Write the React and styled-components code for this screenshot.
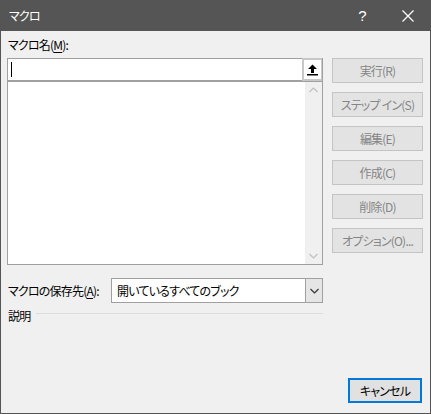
import React from "react";
import styled, { createGlobalStyle } from "styled-components";

const GlobalStyle = createGlobalStyle`
    html, body {
        margin: 0;
        padding: 0;
        background: #f0f0f0;
    }
    body {
        font-family: "Noto Sans CJK JP", "Liberation Sans", sans-serif;
        font-size: 12px;
        font-feature-settings: "palt";
        letter-spacing: -0.8px;
        color: #000;
    }
`;

const Window = styled.div`
    width: 431px;
    height: 414px;
    box-sizing: border-box;
    border: 1px solid #555555;
    border-top: none;
    background: #f0f0f0;
    display: flex;
    flex-direction: column;
`;

const TitleBar = styled.div`
    height: 31px;
    margin: 0 -1px;
    background: #555555;
    color: #ffffff;
    display: flex;
    align-items: center;
    padding-left: 9px;
`;

const Title = styled.div`
    flex: 1;
    font-size: 12px;
`;

const TitleButton = styled.div`
    width: ${(p) => p.w}px;
    height: 31px;
    display: flex;
    align-items: center;
    justify-content: center;
    font-size: 15px;
    font-family: "Liberation Sans", sans-serif;
`;

const Body = styled.div`
    flex: 1;
    display: flex;
    padding: 4px 0 0 6px;
    gap: 9px;
`;

const LeftCol = styled.div`
    width: 316px;
    display: flex;
    flex-direction: column;
`;

const Label = styled.div`
    line-height: 20px;
    height: 20px;
    margin-left: 1px;
    margin-bottom: 3px;
    white-space: nowrap;
`;

const U = styled.span`
    text-decoration: underline;
    text-underline-offset: 2px;
`;

const NameInput = styled.div`
    height: 23px;
    box-sizing: border-box;
    border: 1px solid #a0a0a0;
    background: #fff;
    display: flex;
    align-items: stretch;
`;

const Caret = styled.div`
    width: 1px;
    height: 15px;
    background: #000;
    margin: 3px 0 0 3px;
`;

const UpButton = styled.div`
    margin-left: auto;
    width: 20px;
    box-sizing: border-box;
    border: 2px solid #c8c8c8;
    border-right-width: 1px;
    background: #fff;
    display: flex;
    align-items: center;
    justify-content: center;
    margin-top: -1px;
    margin-bottom: -1px;
`;

const ListBox = styled.div`
    height: 184px;
    box-sizing: border-box;
    border: 1px solid #a0a0a0;
    background: #fff;
    display: flex;
`;

const ScrollBar = styled.div`
    margin-left: auto;
    width: 17px;
    background: #f0f0f0;
    display: flex;
    flex-direction: column;
    justify-content: space-between;
    align-items: center;
    padding: 5px 0;
`;

const StoreRow = styled.div`
    margin-top: 13px;
    display: flex;
    align-items: center;
    height: 25px;
`;

const StoreLabel = styled.div`
    width: 103px;
    padding-left: 1px;
    white-space: nowrap;
`;

const Combo = styled.div`
    flex: 1;
    height: 25px;
    box-sizing: border-box;
    border: 1px solid #a0a0a0;
    background: #fff;
    display: flex;
    align-items: center;
    padding-left: 5px;
`;

const ComboArrow = styled.div`
    margin-left: auto;
    width: 17px;
    height: 23px;
    box-sizing: border-box;
    background: #e5e5e5;
    border-left: 1px solid #a0a0a0;
    display: flex;
    align-items: center;
    justify-content: center;
`;

const DescRow = styled.div`
    margin-top: 1px;
    display: flex;
    align-items: center;
    height: 22px;
`;

const DescLabel = styled.div`
    padding-left: 1px;
    margin-right: 6px;
`;

const Rule = styled.div`
    flex: 1;
    height: 1px;
    background: #dcdcdc;
    margin-top: -4px;
`;

const RightCol = styled.div`
    width: 91px;
    display: flex;
    flex-direction: column;
    gap: 9px;
    padding-top: 23px;
`;

const Btn = styled.div`
    height: 25px;
    box-sizing: border-box;
    border: 1px solid ${(p) => (p.primary ? "#0078d7" : "#c4c4c4")};
    border-width: ${(p) => (p.primary ? "2px" : "1px")};
    background: ${(p) => (p.primary ? "#e1e1e1" : "#e3e3e3")};
    color: ${(p) => (p.primary ? "#000" : "#858585")};
    display: flex;
    align-items: center;
    justify-content: center;
    white-space: nowrap;
`;

const Footer = styled.div`
    display: flex;
    justify-content: flex-end;
    padding: 0 8px 10px 0;
`;

const CancelBtn = styled(Btn)`
    width: 74px;
`;

const Chevron = ({ up, color = "#c0c0c0" }) => (
    <svg width="9" height="6" viewBox="0 0 9 6">
        <path
            d={up ? "M0.5 5 L4.5 1 L8.5 5" : "M0.5 1 L4.5 5 L8.5 1"}
            fill="none"
            stroke={color}
            strokeWidth="1.2"
        />
    </svg>
);

const App = () => {
    const buttons = ["実行(R)", "ステップ イン(S)", "編集(E)", "作成(C)", "削除(D)", "オプション(O)..."];
    return (
        <>
            <GlobalStyle />
            <Window>
                <TitleBar>
                    <Title>マクロ</Title>
                    <TitleButton w={46}>?</TitleButton>
                    <TitleButton w={46}>
                        <svg width="12" height="12" viewBox="0 0 12 12">
                            <path d="M0.5 0.5 L11.5 11.5 M11.5 0.5 L0.5 11.5" stroke="#fff" strokeWidth="1.2" />
                        </svg>
                    </TitleButton>
                </TitleBar>
                <Body>
                    <LeftCol>
                        <Label>
                            マクロ名(<U>M</U>):
                        </Label>
                        <NameInput>
                            <Caret />
                            <UpButton>
                                <svg width="11" height="12" viewBox="0 0 11 12">
                                    <path d="M5.5 0.5 L10 5 L7 5 L7 9 L4 9 L4 5 L1 5 Z" fill="#000" />
                                    <rect x="0" y="10" width="11" height="1.5" fill="#000" />
                                </svg>
                            </UpButton>
                        </NameInput>
                        <ListBox>
                            <ScrollBar>
                                <Chevron up />
                                <Chevron />
                            </ScrollBar>
                        </ListBox>
                        <StoreRow>
                            <StoreLabel>
                                マクロの保存先(<U>A</U>):
                            </StoreLabel>
                            <Combo>
                                開いているすべてのブック
                                <ComboArrow>
                                    <Chevron color="#333" />
                                </ComboArrow>
                            </Combo>
                        </StoreRow>
                        <DescRow>
                            <DescLabel>説明</DescLabel>
                            <Rule />
                        </DescRow>
                    </LeftCol>
                    <RightCol>
                        {buttons.map((b) => (
                            <Btn key={b}>{b}</Btn>
                        ))}
                    </RightCol>
                </Body>
                <Footer>
                    <CancelBtn primary>キャンセル</CancelBtn>
                </Footer>
            </Window>
        </>
    );
};

export default App;
